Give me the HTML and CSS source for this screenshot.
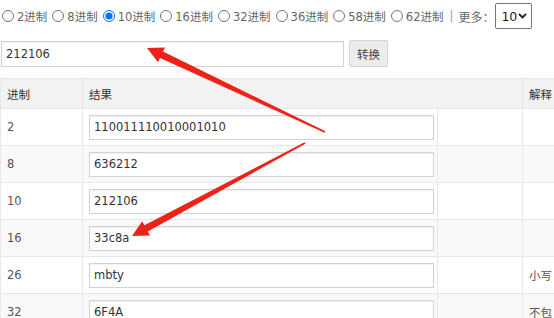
FILE: index.html
```html
<!DOCTYPE html>
<html>
<head>
    <title>进制转换</title>
    <link rel="stylesheet" href="styles.css">
</head>
<body>
<div class="page">
    <div class="base-bar">
        <label class="base-opt"><input type="radio" name="base">2进制</label>
        <label class="base-opt"><input type="radio" name="base">8进制</label>
        <label class="base-opt"><input type="radio" name="base" checked>10进制</label>
        <label class="base-opt"><input type="radio" name="base">16进制</label>
        <label class="base-opt"><input type="radio" name="base">32进制</label>
        <label class="base-opt"><input type="radio" name="base">36进制</label>
        <label class="base-opt"><input type="radio" name="base">58进制</label>
        <label class="base-opt"><input type="radio" name="base">62进制</label>
        <span class="sep">|</span>
        <span class="more">更多&#xFF1A;</span>
        <div class="more-select">
            <span>10</span>
            <svg width="9" height="6" viewBox="0 0 9 6"><path d="M1 1 L4.5 4.5 L8 1" fill="none" stroke="#222" stroke-width="1.8"/></svg>
        </div>
    </div>

    <div class="input-row">
        <input type="text" class="num-input" value="212106">
        <button type="button" class="convert-btn">转换</button>
    </div>

    <table class="result-table">
        <colgroup>
            <col class="col-base">
            <col class="col-result">
            <col class="col-empty">
            <col class="col-note">
        </colgroup>
        <tr class="head">
            <th>进制</th>
            <th colspan="2">结果</th>
            <th>解释</th>
        </tr>
        <tr>
            <td>2</td>
            <td><input type="text" class="res-input" value="110011110010001010"></td>
            <td></td>
            <td></td>
        </tr>
        <tr class="alt">
            <td>8</td>
            <td><input type="text" class="res-input" value="636212"></td>
            <td></td>
            <td></td>
        </tr>
        <tr>
            <td>10</td>
            <td><input type="text" class="res-input" value="212106"></td>
            <td></td>
            <td></td>
        </tr>
        <tr class="alt">
            <td>16</td>
            <td><input type="text" class="res-input" value="33c8a"></td>
            <td></td>
            <td></td>
        </tr>
        <tr>
            <td>26</td>
            <td><input type="text" class="res-input" value="mbty"></td>
            <td></td>
            <td>小写</td>
        </tr>
        <tr class="alt">
            <td>32</td>
            <td><input type="text" class="res-input" value="6F4A"></td>
            <td></td>
            <td>不包</td>
        </tr>
    </table>

    <!-- red arrows drawn on top of the screenshot -->
    <svg class="arrows" width="554" height="318" viewBox="0 0 554 318">
        <polygon fill="#ec2417" points="147,48 165,47.4 163,51.6 325.4,131.3 324.6,132.7 160,58 158,62.2"/>
        <polygon fill="#ec2417" points="132,236 150,235.6 147.8,231.5 305.4,143.7 304.6,142.3 144.4,225.3 142.2,221.2"/>
    </svg>
</div>
</body>
</html>
```

FILE: styles.css
```css
body {
    margin: 0;
    font-family: "DejaVu Sans", "Noto Sans CJK SC", sans-serif;
    font-size: 11.5px;
    color: #555;
    background-color: #fff;
}

.page {
    position: relative;
    width: 554px;
    height: 318px;
    overflow: hidden;
}

.base-bar {
    display: flex;
    align-items: center;
    height: 32px;
    padding-left: 2px;
    white-space: nowrap;
    color: #666;
}

.base-opt {
    display: flex;
    align-items: center;
    margin-right: 5px;
}

.base-opt input {
    width: 12px;
    height: 12px;
    margin: 0 3px 0 0;
}

.sep {
    margin: 0 5px 0 1px;
    color: #999;
}

.more {
    font-family: "Noto Sans CJK SC", sans-serif;
    font-size: 12px;
    margin-right: 1px;
}

.more-select {
    box-sizing: border-box;
    display: flex;
    align-items: center;
    justify-content: space-between;
    width: 37px;
    height: 26px;
    padding: 0 4px 0 5px;
    border: 1px solid #767676;
    border-radius: 2px;
    font-size: 12.5px;
    color: #222;
    background-color: #fff;
}

.input-row {
    display: flex;
    align-items: center;
    margin-top: 8px;
    padding-left: 1px;
}

.num-input {
    box-sizing: border-box;
    width: 343px;
    height: 26px;
    border: 1px solid #d2d2d2;
    box-shadow: inset 0 1px 1px rgba(0, 0, 0, 0.06);
    padding: 0 4px;
    font-family: "DejaVu Sans", sans-serif;
    font-size: 11.5px;
    color: #333;
    outline: none;
}

.convert-btn {
    box-sizing: border-box;
    width: 39px;
    height: 27px;
    margin-left: 5px;
    background-color: #ececec;
    border: 1px solid #d6d6d6;
    border-radius: 2px;
    font-family: "Noto Sans CJK SC", sans-serif;
    font-size: 11.5px;
    color: #444;
    padding: 0;
}

.result-table {
    margin-top: 11px;
    border-collapse: collapse;
    table-layout: fixed;
    width: 700px;
}

.col-base {
    width: 82px;
}

.col-result {
    width: 355px;
}

.col-empty {
    width: 85px;
}

.col-note {
    width: 178px;
}

.result-table th,
.result-table td {
    border: 1px solid #e8e8e8;
    height: 37px;
    padding: 0 0 0 6px;
    text-align: left;
    white-space: nowrap;
    overflow: hidden;
    box-sizing: border-box;
}

.result-table .head th {
    height: 30px;
    background-color: #f2f2f2;
    font-weight: normal;
    color: #333;
}

.result-table tr.alt td {
    background-color: #f9f9f9;
}

.res-input {
    box-sizing: border-box;
    display: block;
    width: 345px;
    height: 25px;
    border: 1px solid #d2d2d2;
    box-shadow: inset 0 1px 1px rgba(0, 0, 0, 0.06);
    padding: 0 4px;
    font-family: "DejaVu Sans", sans-serif;
    font-size: 11.5px;
    color: #333;
    background-color: #fff;
    outline: none;
}

.arrows {
    position: absolute;
    left: 0;
    top: 0;
    pointer-events: none;
}
```
